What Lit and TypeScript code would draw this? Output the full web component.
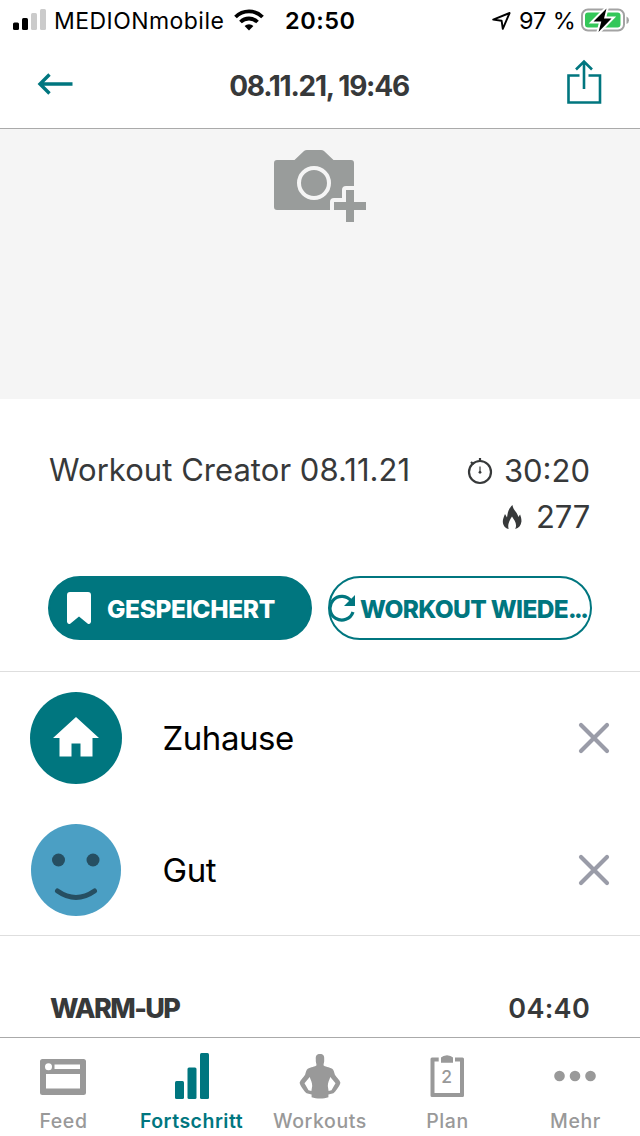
import { LitElement, html, css, svg } from "lit";
import { customElement } from "lit/decorators.js";
import { classMap } from "lit/directives/class-map.js";

const tabs = [
  {
    label: "Feed", key: "feed", nudge: true,
    icon: svg`<path fill-rule="evenodd" d="M2.5 0h41a2.5 2.5 0 0 1 2.500 2.500v31a2.500 2.500 0 0 1-2.500 2.500h-41a2.500 2.500 0 0 1-2.500-2.500v-31a2.500 2.500 0 0 1 2.500-2.500zM6 15v14.500h34V15zM14.500 5.500v4.500H40V5.500zM8.500 4.300a3.500 3.500 0 1 0 0 7a3.500 3.500 0 0 0 0-7z" transform="translate(9 14)"/>`,
  },
  {
    label: "Fortschritt", key: "progress", nudge: false,
    icon: svg`<rect x="15" y="36" width="9" height="18" rx="1.500"/><rect x="27.500" y="22.500" width="9" height="31.500" rx="1.500"/><rect x="40" y="8" width="9" height="46" rx="1.500"/>`,
  },
  {
    label: "Workouts", key: "workouts", nudge: false,
    icon: svg`<path fill-rule="evenodd" d="M32 9c3.200 0 4.500 1.500 4.200 5.500.2 3-.7 4-.7 5.800 1 1.500 6 1.700 8.700 3.500 1.500 1.200 2 3.500 2.700 6 1.500 2.500 5 5.500 5.500 8-.5 3-5 9-7 10.500l-5 1.200v2.700c-4.500 1.800-12 1.800-16.800 0v-2.700l-5-1.200c-2-1.500-6.500-7.500-7-10.500.5-2.500 4-5.500 5.500-8 .7-2.500 1.200-4.800 2.700-6 2.700-1.800 7.700-2 8.700-3.500 0-1.800-.9-2.800-.7-5.800-.3-4 1-5.500 4.200-5.500zM21.700 32l-5.200 6.300 4 7 2.900.7.800-5c0-3.500-1.500-6-2.500-9zM42.300 32c-1 3-2.500 5.500-2.500 9l.8 5 2.900-.7 4-7z"/>`,
  },
  {
    label: "Plan", key: "plan", nudge: true,
    icon: svg`<path fill-rule="evenodd" d="M23.700 12.500H17a1.500 1.500 0 0 0-1.500 1.500v36.500a1.500 1.500 0 0 0 1.500 1.500h30.500a1.500 1.500 0 0 0 1.500-1.500V14a1.500 1.500 0 0 0-1.500-1.500H40v4h5V48H19.500V16.500h4.200zM26 17.800v-5.300q2-2 6-2.200 4 .2 6 2.200v5.300z"/><text x="32" y="38.300" text-anchor="middle" font-size="17.500" font-weight="500" font-family="Inter, sans-serif">2</text>`,
  },
  {
    label: "Mehr", key: "more", nudge: true,
    icon: svg`<circle cx="16.500" cy="31" r="5.300"/><circle cx="32" cy="31" r="5.300"/><circle cx="47.500" cy="31" r="5.300"/>`,
  },
];

@customElement("status-bar")
class StatusBar extends LitElement {
  static styles = css`
    :host { display: flex; align-items: center; height: 40px; box-sizing: border-box; padding-top: 1px; font-family: Inter, sans-serif; color: #000; white-space: nowrap; }
    svg { display: block; flex: none; }
    .signal { margin: 0 0 1px 13px; }
    .carrier { margin-left: 7px; width: 180px; font-size: 23px; letter-spacing: .450px; }
    .wifi { margin-bottom: 1px; }
    .clock { margin-left: 21px; width: 207px; font-size: 23.500px; font-weight: 600; letter-spacing: .5px; }
    .percent { margin-left: 8px; width: 62px; font-size: 23.500px; letter-spacing: -.1px; }
    .battery { margin-bottom: 2px; }
  `;
  render() {
    return html`
      <svg class="signal" width="34" height="22" viewBox="0 0 34 22"><rect y="13.500" width="6" height="7.500" rx="1.500"/><rect x="9" y="9" width="6" height="12" rx="1.500"/><g fill="#cbcbcb"><rect x="18" y="4" width="6" height="17" rx="1.500"/><rect x="27" width="6" height="21" rx="1.500"/></g></svg>
      <span class="carrier">MEDIONmobile</span>
      <svg class="wifi" width="30" height="22" viewBox="0 0 30 22"><path d="M15 21.500l-4.400-4.400a6.300 6.300 0 0 1 8.800 0z"/><g fill="none" stroke="#000" stroke-width="3.800"><path d="M1.500 8a19.200 19.200 0 0 1 27 0"/><path d="M6.500 13a12.100 12.100 0 0 1 17 0"/></g></svg>
      <span class="clock">20:50</span>
      <svg width="19" height="20" viewBox="0 0 19 20"><path d="M1.200 8.600L17.600 2 10.800 17.800 9.600 9.700z" fill="none" stroke="#000" stroke-width="1.900" stroke-linejoin="round"/></svg>
      <span class="percent">97 %</span>
      <svg class="battery" width="50" height="26" viewBox="0 0 50 26"><rect x="1" y="2.500" width="42" height="21" rx="6" fill="none" stroke="#a3a3a3" stroke-width="2"/><path d="M45.500 9.500q2.500 1 2.500 3.700t-2.500 3.700z" fill="#a3a3a3"/><rect x="4" y="5.500" width="35.500" height="15" rx="3" fill="#34c759"/><path d="M25.500 1.500L12.500 14.500h7.800L17.500 25 30.500 11.500h-7.500z" stroke="#fff" stroke-width="4"/><path d="M25.500 1.500L12.500 14.500h7.800L17.500 25 30.500 11.500h-7.500z"/></svg>
    `;
  }
}

@customElement("choice-row")
class ChoiceRow extends LitElement {
  static properties = { label: {} };
  declare label: string;
  static styles = css`
    :host { display: flex; align-items: center; height: 132px; box-sizing: border-box; padding: 0 30px; }
    .badge { width: 92px; height: 92px; }
    .label { flex: 1; margin-left: 40.500px; font: 400 33px/40px Inter, sans-serif; color: #000; letter-spacing: -.450px; }
    svg { display: block; }
  `;
  render() {
    return html`
      <div class="badge"><slot></slot></div>
      <span class="label">${this.label}</span>
      <svg width="32" height="32" viewBox="0 0 32 32"><path d="M3 3l26 26M29 3L3 29" stroke="#9a9ca8" stroke-width="4.200" stroke-linecap="round"/></svg>
    `;
  }
}

@customElement("app-root")
class AppRoot extends LitElement {
  static styles = css`
    :host { display: flex; flex-direction: column; width: 640px; height: 1136px; overflow: hidden; background: #fff; color: #37393a; font-family: Inter, sans-serif; white-space: nowrap; }
    svg { display: block; flex: none; }
    .header { display: grid; grid-template-columns: 100px 1fr 100px; align-items: center; height: 89px; box-sizing: border-box; border-bottom: 1px solid #aaa; }
    .back { margin: 0 0 1px 37px; }
    .title { text-align: center; margin: 4px 2px 0 0; font-size: 28px; font-weight: 700; letter-spacing: -1.250px; }
    .share { margin-left: 26px; margin-top: -5px; }
    .content { flex: 1; min-height: 0; overflow: hidden; }
    .photo { display: flex; justify-content: center; height: 270px; box-sizing: border-box; padding-top: 20px; background: #f5f5f5; }
    .info { height: 273px; box-sizing: border-box; padding: 48px 48px 0; border-bottom: 1px solid #dedede; }
    .summary { display: flex; justify-content: space-between; height: 129px; font-size: 31px; line-height: 46px; }
    .name { padding-left: 1px; letter-spacing: .040px; }
    .stats { padding: 1px 2px 0 0; }
    .stat { display: flex; align-items: center; justify-content: flex-end; }
    .time { margin-left: 11px; }
    .kcal { margin-left: 14px; letter-spacing: -.2px; }
    .buttons { display: grid; grid-template-columns: 264px 264px; gap: 16px; }
    .button { display: flex; align-items: center; height: 64px; box-sizing: border-box; border: 2px solid #00767f; border-radius: 32px; font-size: 24.500px; font-weight: 800; color: #00767f; }
    .solid { background: #00767f; color: #fff; }
    .bookmark { margin-left: 17px; }
    .saved { margin: 2px 0 0 16px; letter-spacing: -.350px; }
    .again { margin: 2px 0 0 4px; letter-spacing: -.650px; }
    .dots { letter-spacing: -2.600px; }
    .repeat { margin-left: -1px; }
    .choices { border-bottom: 1px solid #dedede; height: 263px; }
    .section { display: flex; justify-content: space-between; align-items: center; padding: 55px 50px 0; font-size: 27px; line-height: 36px; }
    .phase { font-weight: 800; letter-spacing: -1.600px; }
    .phase-time { font-weight: 600; letter-spacing: .3px; }
    .tabs { display: grid; grid-template-columns: repeat(5, 1fr); height: 99px; box-sizing: border-box; border-top: 1px solid #aaa; }
    .tab { display: flex; flex-direction: column; align-items: center; padding-top: 7px; color: #999; font-size: 19.500px; font-weight: 500; letter-spacing: .6px; line-height: 24px; fill: currentColor; }
    .nudge { padding-right: 2px; }
    .nudge span { padding-left: 1px; }
    .active { color: #00767f; font-weight: 600; letter-spacing: .5px; }
    .active span { padding-right: 1px; }
  `;
  render() {
    return html`
      <status-bar></status-bar>
      <header class="header">
        <svg class="back" width="36" height="24" viewBox="0 0 36 24"><path d="M35.500 12H3M12.500 2.500L3 12l9.500 9.500" fill="none" stroke="#00767f" stroke-width="3.400"/></svg>
        <span class="title">08.11.21, 19:46</span>
        <svg class="share" width="36" height="46" viewBox="0 0 36 46"><path d="M13.500 16.500H2.500V43.500h31.500V16.500H22.500M18 30V3M10 10.500l8-8 8 8" fill="none" stroke="#00767f" stroke-width="2.600"/></svg>
      </header>
      <main class="content">
        <div class="photo">
          <svg width="92" height="74" viewBox="0 0 92 74"><path fill="#999c9b" d="M3 11h17.500L30 2q1.200-1 3-1h14q1.800 0 3 1l9.500 9H77a3 3 0 0 1 3 3v23h-8q-4 0-4 4v8h-8q-4 0-4 4v8H3a3 3 0 0 1-3-3V14a3 3 0 0 1 3-3z"/><circle cx="40" cy="34" r="15" fill="none" stroke="#f5f5f5" stroke-width="4"/><path fill="#999c9b" d="M72 41h8v12h12v8H80v12h-8V61H60v-8h12z"/></svg>
        </div>
        <section class="info">
          <div class="summary">
            <span class="name">Workout Creator 08.11.21</span>
            <div class="stats">
              <div class="stat"><svg width="26" height="28" viewBox="0 0 26 28"><circle cx="13" cy="15" r="11" fill="none" stroke="#37393a" stroke-width="2.200"/><path d="M13 1v3.500M4 5l2.500 2.500" stroke="#37393a" stroke-width="2.200"/><path d="M13 9.500V15" stroke="#37393a" stroke-width="1.200"/><circle cx="13" cy="15.300" r="1.400" fill="#37393a"/></svg><span class="time">30:20</span></div>
              <div class="stat"><svg width="20" height="26" viewBox="0 0 22 26" preserveAspectRatio="none"><path fill="#37393a" d="M11.500 1C6 6 6.500 9 5.500 13.500L3.300 10C1.500 14 0 17 1.500 20.500c1 2.500 3 4 5.800 4.500-1.500-5 1-8.500 3.700-12.500 2.700 4 6.200 7.500 3.500 12.500 4-.8 6.300-3.300 6.900-7.500.1-2.500-.5-4.500-1.500-7l-2 2.500C17 8 12.500 7 11.500 1z"/></svg><span class="kcal">277</span></div>
            </div>
          </div>
          <div class="buttons">
            <div class="button solid"><svg class="bookmark" width="24" height="34" viewBox="0 0 24 34"><path fill="#fff" d="M3 1h18a3 3 0 0 1 3 3v27q-1 3-3.500 1.500L12 25.500l-8.500 7Q1 34 0 31V4a3 3 0 0 1 3-3z"/></svg><span class="saved">GESPEICHERT</span></div>
            <div class="button"><svg class="repeat" width="27" height="32" viewBox="0 0 27 32"><path d="M22.500 9.500A11.800 11.800 0 1 0 24 20" fill="none" stroke="#00767f" stroke-width="3.200"/><path d="M26 3v11H15z" fill="#00767f"/></svg><span class="again">WORKOUT WIEDE<span class="dots">...</span></span></div>
          </div>
        </section>
        <section class="choices">
          <choice-row label="Zuhause"><svg width="92" height="92" viewBox="0 0 92 92"><circle cx="46" cy="46" r="46" fill="#00767f"/><path fill="#fff" d="M46 25l23 21h-6.500v18.500h-12v-13h-9v13h-12V46H23z"/></svg></choice-row>
          <choice-row label="Gut"><svg width="92" height="92" viewBox="0 0 92 92"><ellipse cx="46" cy="46" rx="45" ry="46" fill="#4b9fc4"/><g fill="#264f62"><circle cx="28.500" cy="36" r="6.500"/><circle cx="63" cy="36" r="6.500"/></g><path d="M27.500 67q18.500 13 37 0" fill="none" stroke="#264f62" stroke-width="5" stroke-linecap="round"/></svg></choice-row>
        </section>
        <section class="section"><span class="phase">WARM-UP</span><span class="phase-time">04:40</span></section>
      </main>
      <nav class="tabs">
        ${tabs.map((t) => html`<div class=${classMap({ tab: true, active: t.key === "progress", nudge: t.nudge })}><svg width="64" height="64" viewBox="0 0 64 64">${t.icon}</svg><span>${t.label}</span></div>`)}
      </nav>
    `;
  }
}
